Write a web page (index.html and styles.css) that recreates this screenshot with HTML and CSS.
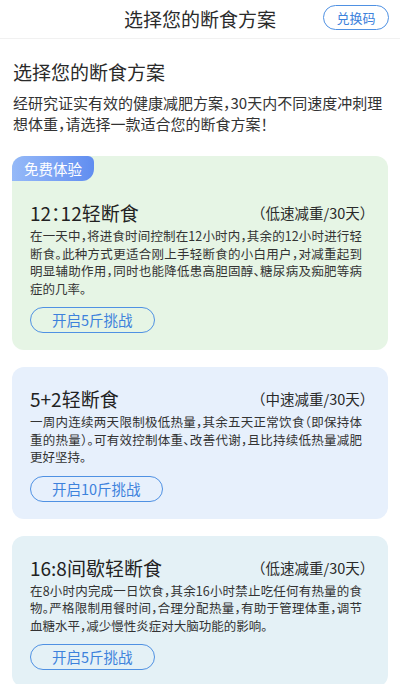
FILE: index.html
```html
<!DOCTYPE html>
<html lang="zh-CN">
<head>
<meta charset="utf-8">
<meta name="viewport" content="width=device-width, initial-scale=1">
<title>选择您的断食方案</title>
<link rel="stylesheet" href="styles.css">
</head>
<body>
<header class="topbar">
  <span class="topbar-spacer"></span>
  <h1 class="topbar-title">选择您的断食方案</h1>
  <button class="redeem-btn" type="button">兑换码</button>
</header>

<main class="page">
  <h2 class="page-heading">选择您的断食方案</h2>
  <p class="page-intro">经研究证实有效的健康减肥方案，30天内不同速度冲刺理想体重，请选择一款适合您的断食方案！</p>

  <section class="plan plan-green">
    <div class="plan-badge">免费体验</div>
    <div class="plan-body">
      <div class="plan-head">
        <h3 class="plan-title">12：12轻断食</h3>
        <span class="plan-speed">（低速减重/30天）</span>
      </div>
      <p class="plan-desc">
        <span class="ln">在一天中，将进食时间控制在12小时内，其余的12小时进行轻</span>
        <span class="ln">断食。此种方式更适合刚上手轻断食的小白用户，对减重起到</span>
        <span class="ln">明显辅助作用，同时也能降低患高胆固醇、糖尿病及痴肥等病</span>
        <span class="ln ln-last">症的几率。</span>
      </p>
      <button class="challenge-btn" type="button">开启5斤挑战</button>
    </div>
  </section>

  <section class="plan plan-blue">
    <div class="plan-body">
      <div class="plan-head">
        <h3 class="plan-title">5+2轻断食</h3>
        <span class="plan-speed">（中速减重/30天）</span>
      </div>
      <p class="plan-desc">
        <span class="ln">一周内连续两天限制极低热量，其余五天正常饮食（即保持体</span>
        <span class="ln">重的热量）。可有效控制体重、改善代谢，且比持续低热量减肥</span>
        <span class="ln ln-last">更好坚持。</span>
      </p>
      <button class="challenge-btn" type="button">开启10斤挑战</button>
    </div>
  </section>

  <section class="plan plan-cyan">
    <div class="plan-body">
      <div class="plan-head">
        <h3 class="plan-title">16:8间歇轻断食</h3>
        <span class="plan-speed">（低速减重/30天）</span>
      </div>
      <p class="plan-desc">
        <span class="ln">在8小时内完成一日饮食，其余16小时禁止吃任何有热量的食</span>
        <span class="ln">物。严格限制用餐时间，合理分配热量，有助于管理体重，调节</span>
        <span class="ln ln-last">血糖水平，减少慢性炎症对大脑功能的影响。</span>
      </p>
      <button class="challenge-btn" type="button">开启5斤挑战</button>
    </div>
  </section>
</main>
</body>
</html>
```

FILE: styles.css
```css
* {
  box-sizing: border-box;
}

html, body {
  margin: 0;
  padding: 0;
  background: #ffffff;
}

body {
  font-family: "Noto Sans CJK SC", "Noto Sans", sans-serif;
  font-feature-settings: "halt";
  color: #2a2a2a;
}

h1, h2, h3, p {
  margin: 0;
  font-weight: 400;
}

button {
  font-family: inherit;
  font-feature-settings: inherit;
  background: transparent;
  cursor: pointer;
}

/* top bar */
.topbar {
  height: 39px;
  display: grid;
  grid-template-columns: 1fr auto 1fr;
  align-items: center;
  padding: 0 11px;
  border-bottom: 1px solid #f1f1f1;
}

.topbar-title {
  font-size: 19px;
  line-height: 26px;
  color: #2b2b2b;
  text-align: center;
}

.redeem-btn {
  justify-self: end;
  align-self: start;
  margin-top: 5px;
  width: 66px;
  height: 25px;
  padding: 0;
  border: 1.5px solid #4f91e3;
  border-radius: 13px;
  color: #3d82dc;
  font-size: 13px;
  line-height: 20px;
}

/* page */
.page {
  padding: 20px 12px 0;
  display: flex;
  flex-direction: column;
}

.page-heading {
  font-size: 19px;
  line-height: 26px;
  color: #2a2a2a;
  padding-left: 1px;
}

.page-intro {
  margin-top: 6.5px;
  padding: 0 1px;
  font-size: 15px;
  line-height: 21px;
  color: #333333;
}

/* plan cards */
.plan {
  border-radius: 12px;
  overflow: hidden;
  margin-top: 17px;
}

.plan-green {
  margin-top: 22.5px;
  background: #e6f5e5;
}

.plan-blue {
  background: #e7f0fc;
}

.plan-cyan {
  background: #e4f1f6;
}

.plan-badge {
  width: 82px;
  height: 25px;
  display: flex;
  align-items: center;
  justify-content: center;
  font-size: 14.5px;
  color: #ffffff;
  background: linear-gradient(90deg, #95b9f8 0%, #7aa2f4 55%, #608df0 100%);
  border-radius: 0 6px 12px 0;
}

.plan-body {
  padding: 20px 26px 17px 18px;
}

.plan-head {
  display: flex;
  align-items: center;
  justify-content: space-between;
  margin-right: -5px;
}

.plan-title {
  font-size: 19px;
  line-height: 24px;
  color: #222222;
}

.plan-speed {
  font-size: 14.5px;
  line-height: 24px;
  color: #2a2a2a;
}

.plan-desc {
  margin-top: 2px;
  font-size: 12.5px;
  line-height: 17.5px;
  color: #333333;
}

.plan-desc .ln {
  display: block;
  white-space: nowrap;
  text-align: justify;
  text-align-last: justify;
}

.plan-desc .ln-last {
  text-align-last: left;
}

.challenge-btn {
  margin-top: 10px;
  height: 26px;
  padding: 0 21px;
  border: 1.5px solid #4f91e3;
  border-radius: 13px;
  color: #3d82dc;
  font-size: 14.5px;
  line-height: 22px;
}
```
